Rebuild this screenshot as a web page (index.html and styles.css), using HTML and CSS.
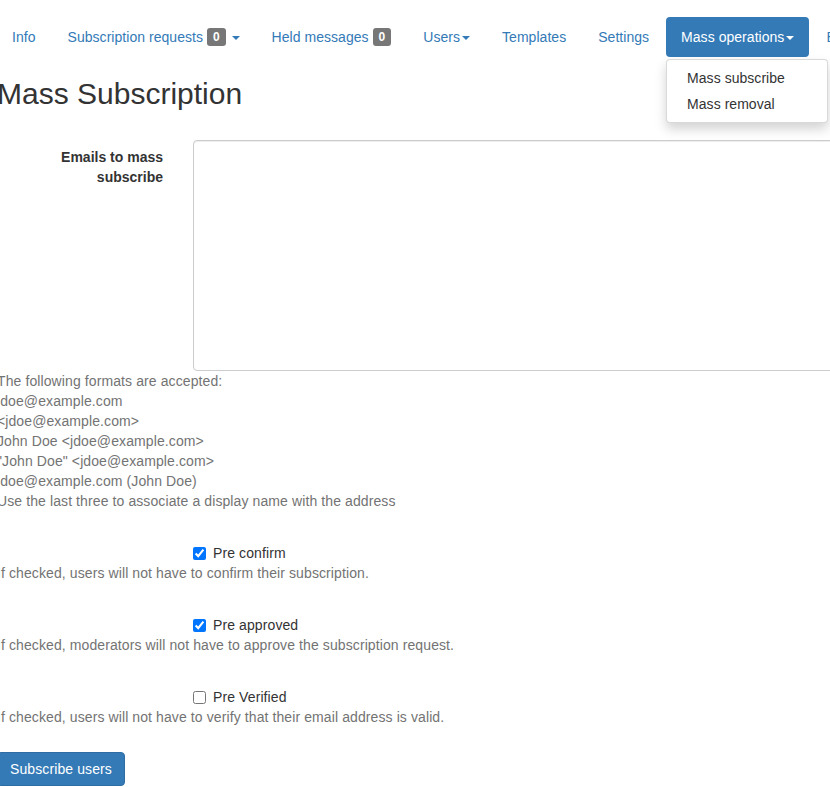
FILE: index.html
```html
<!DOCTYPE html>
<html lang="en">
<head>
  <meta charset="UTF-8">
  <title>Mass Subscription</title>
  <link rel="stylesheet" href="styles.css">
</head>
<body>
  <div class="page">

    <!-- list navigation -->
    <ul class="nav-pills">
      <li><a href="#">Info</a></li>
      <li><a href="#">Subscription requests <span class="badge">0</span> <span class="caret"></span></a></li>
      <li><a href="#">Held messages <span class="badge">0</span></a></li>
      <li><a href="#">Users<span class="caret"></span></a></li>
      <li><a href="#">Templates</a></li>
      <li><a href="#">Settings</a></li>
      <li class="dropdown open">
        <a href="#" class="active">Mass operations<span class="caret"></span></a>
        <ul class="dropdown-menu">
          <li><a href="#">Mass subscribe</a></li>
          <li><a href="#">Mass removal</a></li>
        </ul>
      </li>
      <li><a href="#">Bans</a></li>
    </ul>

    <h2>Mass Subscription</h2>

    <form class="form-horizontal">
      <div class="form-group">
        <div class="row">
          <label class="control-label" for="emails">Emails to mass subscribe</label>
          <textarea id="emails" class="form-control"></textarea>
        </div>
        <p class="help-block">
          The following formats are accepted:<br>
          jdoe@example.com<br>
          &lt;jdoe@example.com&gt;<br>
          John Doe &lt;jdoe@example.com&gt;<br>
          "John Doe" &lt;jdoe@example.com&gt;<br>
          jdoe@example.com (John Doe)<br>
          Use the last three to associate a display name with the address
        </p>
      </div>

      <div class="form-group check-group">
        <div class="row">
          <span></span>
          <label class="checkbox"><input type="checkbox" checked> Pre confirm</label>
        </div>
        <p class="help-block">If checked, users will not have to confirm their subscription.</p>
      </div>

      <div class="form-group check-group">
        <div class="row">
          <span></span>
          <label class="checkbox"><input type="checkbox" checked> Pre approved</label>
        </div>
        <p class="help-block">If checked, moderators will not have to approve the subscription request.</p>
      </div>

      <div class="form-group check-group">
        <div class="row">
          <span></span>
          <label class="checkbox"><input type="checkbox"> Pre Verified</label>
        </div>
        <p class="help-block">If checked, users will not have to verify that their email address is valid.</p>
      </div>

      <button type="submit" class="btn-primary">Subscribe users</button>
    </form>

  </div>
</body>
</html>
```

FILE: styles.css
```css
html, body {
  overflow: hidden;
}

body {
  margin: 0;
  font-family: "Liberation Sans", Arial, sans-serif;
  font-size: 14px;
  line-height: 20px;
  letter-spacing: 0.1px;
  color: #333;
  background: #fff;
}

/* the page is seen scrolled a little to the right */
.page {
  margin-left: -3px;
  width: 1100px;
}

a {
  color: #337ab7;
  text-decoration: none;
}

/* nav pills */
.nav-pills {
  display: flex;
  list-style: none;
  margin: 17px 0 0;
  padding: 0;
  letter-spacing: 0.04px;
}

.nav-pills > li + li {
  margin-left: 2px;
}

.nav-pills > li > a {
  display: block;
  padding: 10px 15px;
  border-radius: 4px;
  white-space: nowrap;
}

.nav-pills > li > a.active {
  background: #337ab7;
  color: #fff;
}

.badge {
  display: inline-block;
  padding: 3px 6px;
  font-size: 12px;
  font-weight: bold;
  line-height: 12px;
  color: #fff;
  background: #777;
  border-radius: 3px;
  vertical-align: 1px;
}

.caret {
  display: inline-block;
  width: 0;
  height: 0;
  margin-left: 2px;
  vertical-align: middle;
  border-top: 4px solid;
  border-right: 4px solid transparent;
  border-left: 4px solid transparent;
}

.dropdown {
  position: relative;
}

.dropdown-menu {
  position: absolute;
  top: 100%;
  left: 0;
  z-index: 10;
  min-width: 160px;
  margin: 2px 0 0;
  padding: 5px 0;
  list-style: none;
  background: #fff;
  border: 1px solid rgba(0, 0, 0, .15);
  border-radius: 4px;
  box-shadow: 0 6px 12px rgba(0, 0, 0, .175);
}

.dropdown-menu a {
  display: block;
  padding: 3px 20px;
  color: #333;
  white-space: nowrap;
}

h2 {
  margin: 20px 0 30px;
  font-size: 30px;
  font-weight: 500;
  line-height: 33px;
  letter-spacing: 0;
}

/* form */
.form-group {
  margin-bottom: 25px;
}

.row {
  display: grid;
  grid-template-columns: 166px 875px;
  column-gap: 30px;
}

.control-label {
  padding-top: 7px;
  font-weight: bold;
  text-align: right;
  letter-spacing: 0;
}

.form-control {
  display: block;
  box-sizing: border-box;
  height: 231px;
  padding: 6px 12px;
  font-family: inherit;
  font-size: 14px;
  color: #555;
  border: 1px solid #ccc;
  border-radius: 4px;
  box-shadow: inset 0 1px 1px rgba(0, 0, 0, .075);
  resize: vertical;
}

.help-block {
  margin: 0;
  color: #737373;
}

.check-group .row {
  padding-top: 7px;
}

.checkbox {
  display: flex;
  align-items: center;
  gap: 7px;
}

.checkbox input {
  margin: 0;
  width: 13px;
  height: 13px;
}

.btn-primary {
  display: block;
  padding: 6px 12px;
  font-family: inherit;
  font-size: 14px;
  line-height: 20px;
  letter-spacing: 0.1px;
  color: #fff;
  background: #337ab7;
  border: 1px solid #2e6da4;
  border-radius: 4px;
  cursor: pointer;
}
```
